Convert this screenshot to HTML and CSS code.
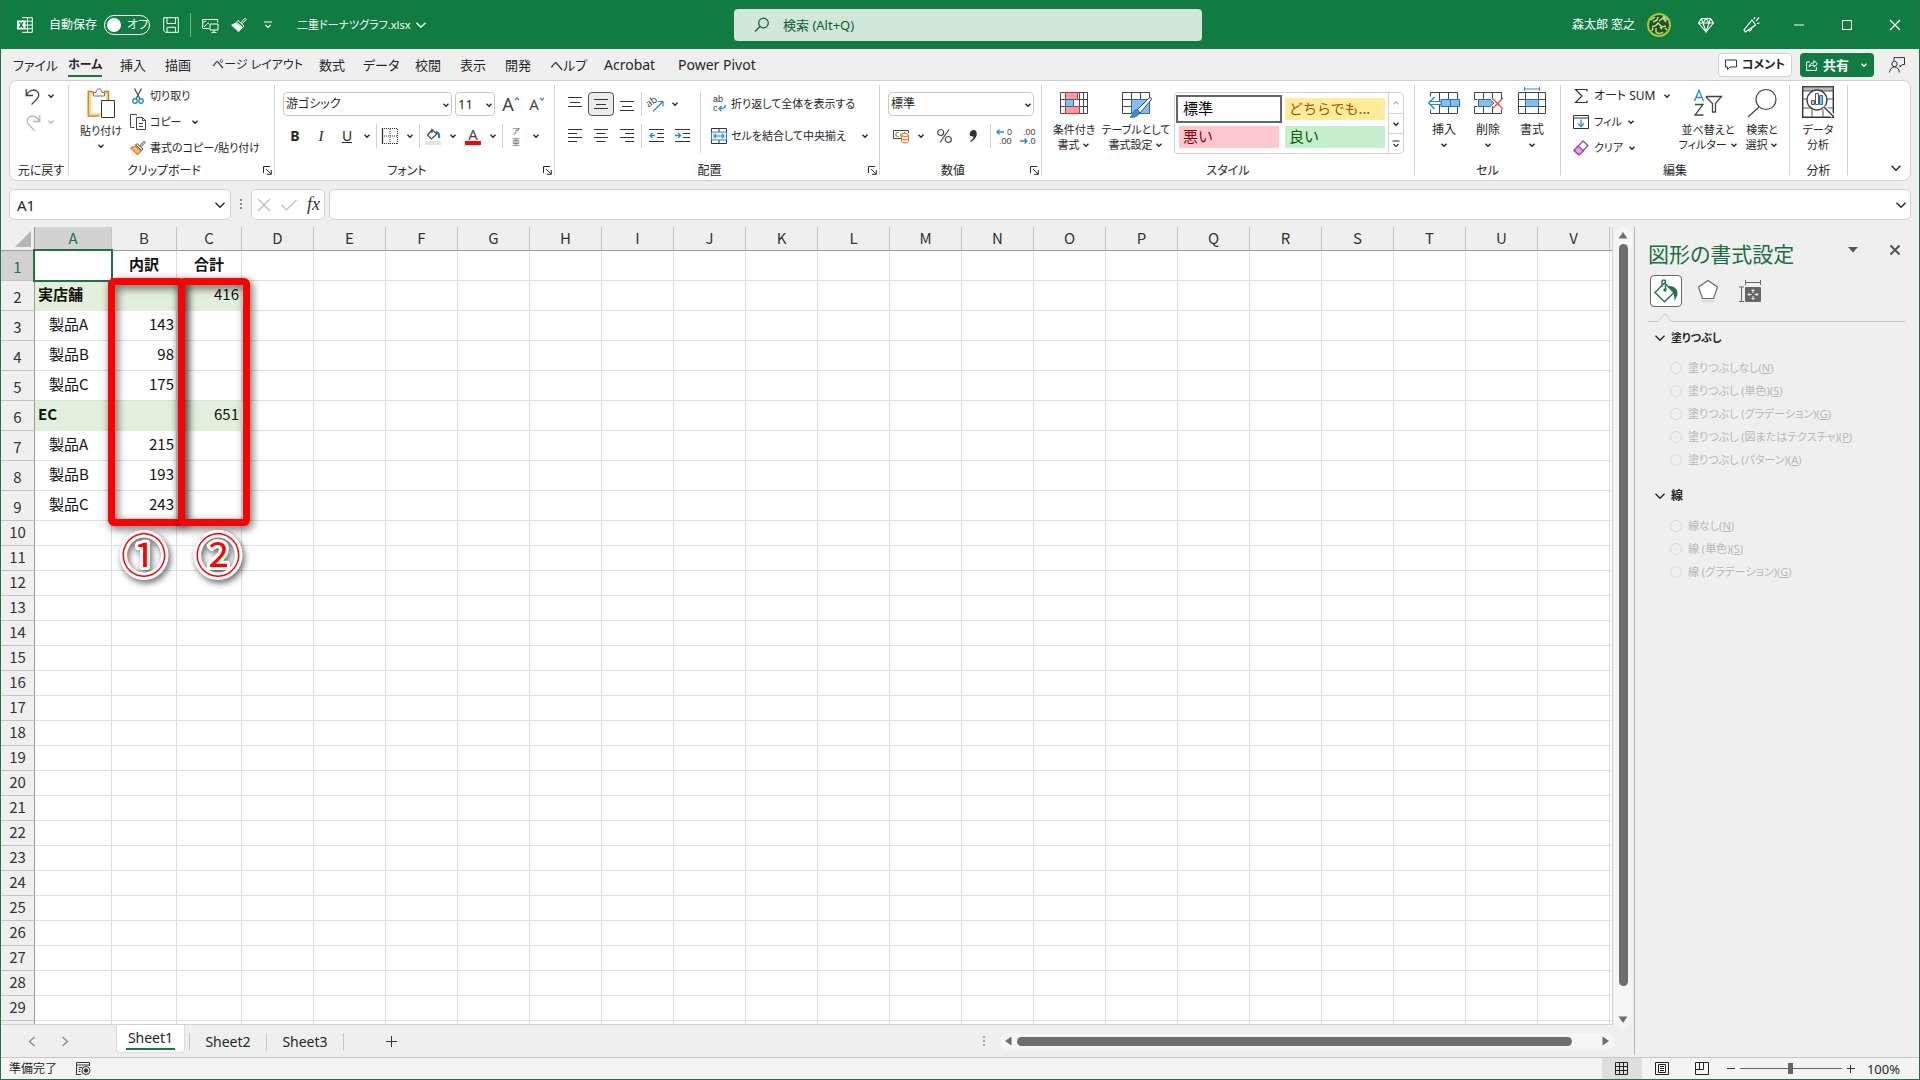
FILE: index.html
```html
<!DOCTYPE html>
<html lang="ja">
<head>
<meta charset="utf-8">
<meta name="viewport" content="width=device-width, initial-scale=1">
<title>二重ドーナツグラフ.xlsx - Excel</title>
<link rel="stylesheet" href="styles.css">
</head>
<body>
<svg class="defs" aria-hidden="true">
  <symbol id="chev" viewBox="0 0 8 8"><path d="M1.5 2.8 4 5.2 6.5 2.8" fill="none" stroke="currentColor" stroke-width="1.4"/></symbol>
  <symbol id="chev-lg" viewBox="0 0 12 12"><path d="M1.5 3.8 6 8.2 10.500 3.8" fill="none" stroke="currentColor" stroke-width="1.400"/></symbol>
  <symbol id="launch" viewBox="0 0 9 9"><path d="M.5 7V.5H7M3 3l5 5M8.300 4v4.300H4" fill="none" stroke="currentColor"/></symbol>
</svg>
<div class="window">
  <header class="titlebar">
    <div class="title-left">
      <svg class="i-excel" width="16" height="16" viewBox="0 0 16 16" fill="none" stroke="#fff"><path d="M5 .7h10.300v14.600H5M5 4.300h10M5 8h10M5 11.700h10M10.500 1v14"/><path d="M0 3.500h8.500v9H0z" fill="#fff" stroke="none"/><path d="m2.300 5.200 3.800 5.600M6.100 5.200l-3.800 5.600" stroke="#107c41" stroke-width="1.500"/></svg>
      <span class="autosave">自動保存</span>
      <button class="toggle" aria-label="自動保存"><span class="knob"></span>オフ</button>
      <button class="tb save" aria-label="保存"><svg width="16" height="16" viewBox="0 0 16 16" fill="none" stroke="#fff"><path d="M.7.7h14.600v14.600H2.500L.7 13.500zM4 .7v5.800h8.500V.7M4 15.300v-5h8.500v5"/></svg></button>
      <span class="tb-sep"></span>
      <button class="tb" aria-label="画面"><svg width="17" height="16" viewBox="0 0 17 16" fill="none" stroke="#fff"><path d="M7 11.500H.7V2.500h15v3M.7 5.500 4 4M2 9.500c2 0 2-3.500 5-3.500"/><path d="M8 7h8v6H8zM12 13v2.500M9.500 15.400h5"/></svg></button>
      <button class="tb" aria-label="書式のコピー"><svg width="16" height="16" viewBox="0 0 16 16"><path d="m10 5.500 4-4.300 1.200 1.200-4 4.200z" fill="none" stroke="#fff"/><path d="M7 3.500 13 9l-1.300 1.500L5.500 5z" fill="#107c41" stroke="#fff"/><path d="M5 5.500 11.500 11 7.500 15 0 8z" fill="#fff"/></svg></button>
      <button class="tb custom" aria-label="クイック アクセス"><svg width="8" height="8" viewBox="0 0 8 8" fill="none" stroke="#fff" stroke-width="1.200"><path d="M0 1h8M1.500 4 4 6.500 6.500 4"/></svg></button>
      <span class="filename">二重ドーナツグラフ.xlsx</span>
      <svg class="file-chev" width="12" height="12"><use href="#chev-lg"/></svg>
    </div>
    <label class="search"><svg width="16" height="16" viewBox="0 0 16 16" fill="none" stroke="#0e5c30" stroke-width="1.200"><circle cx="9.500" cy="6" r="4.800"/><path d="M6 9.500 1 14.500"/></svg><input type="text" placeholder="検索 (Alt+Q)" aria-label="検索"></label>
    <div class="title-right">
      <span>森太郎 窓之</span>
      <svg class="avatar" width="24" height="24" viewBox="0 0 24 24"><circle cx="12" cy="12" r="12" fill="#a5c63b"/><circle cx="12" cy="12" r="10" fill="#20541d"/><path d="M4 7 8 4M16 3l4 4M6 9l4-2 1-3M12 8l4-3 3 4M5 14c4-1 5-2 6-4l4 4 4-1M5 18l1-3M9 15v4c1 2 5 2 7 0M13 14l2 2M18 15l2 2" fill="none" stroke="#c9d9a0" stroke-width="1.500"/></svg>
      <button class="tb premium" aria-label="Premium"><svg width="16" height="16" viewBox="0 0 16 16" fill="none" stroke="#fff" stroke-width="1.100"><path d="M3.500 1.500h9L15.500 6 8 15 .5 6zM.5 6h15M5 6l3 9 3-9M3.500 1.500 5 6l3-4.500L11 6l1.500-4.500"/></svg></button>
      <button class="tb pen" aria-label="新機能"><svg width="17" height="17" viewBox="0 0 17 17" fill="none" stroke="#fff" stroke-width="1.200"><path d="M9 4 1 14l1.500 2L12.500 9zM9 4l3.500 5M5.500 13.500c0 2 3 2 3.500-2M11 3l1-2M13 5l3-3.500M14 7.500l2.500-.5"/></svg></button>
      <button class="win" aria-label="最小化"><svg width="10" height="10" viewBox="0 0 10 10"><path d="M0 5h10" stroke="#fff"/></svg></button>
      <button class="win" aria-label="最大化"><svg width="10" height="10" viewBox="0 0 10 10"><path d="M.5.5h9v9h-9z" fill="none" stroke="#fff"/></svg></button>
      <button class="win" aria-label="閉じる"><svg width="10" height="10" viewBox="0 0 10 10"><path d="m0 0 10 10M10 0 0 10" stroke="#fff" stroke-width="1.200"/></svg></button>
    </div>
  </header>

  <nav class="tabs">
    <div class="tab-list">
      <a href="#file">ファイル</a><a href="#home" class="active">ホーム</a><a href="#insert">挿入</a><a href="#draw">描画</a><a href="#layout" class="long">ページ レイアウト</a><a href="#formulas">数式</a><a href="#data">データ</a><a href="#review">校閲</a><a href="#view">表示</a><a href="#dev">開発</a><a href="#help">ヘルプ</a><a href="#acrobat" class="latin">Acrobat</a><a href="#pivot" class="latin">Power Pivot</a>
    </div>
    <div class="tab-actions">
      <button class="comment"><svg width="12" height="12" viewBox="0 0 12 12" fill="none" stroke="#333"><path d="M.5 1h11v7H5L2.500 10.500V8h-2z"/></svg>コメント</button>
      <button class="share"><svg width="12" height="12" viewBox="0 0 12 12" fill="none" stroke="#fff"><path d="M4 3H.6v8.400h9.800V8M3 8c.5-3 2-4 5-4V1.500L11.500 5 8 8V6C6 6 4.500 6.500 3 8z"/></svg>共有<svg class="c" width="8" height="8"><use href="#chev"/></svg></button>
      <button class="plain" aria-label="フィードバック"><svg width="16" height="16" viewBox="0 0 16 16" fill="none" stroke="#333"><path d="M5 4V.6h10.500v7H13l-2 2.500V8"/><circle cx="5.500" cy="7" r="2.700"/><path d="M.6 15.500c0-7.300 9.800-7.300 9.800 0"/></svg></button>
    </div>
  </nav>

  <section class="ribbon">
    <div class="group g-undo">
      <div class="body rows3">
        <button class="row"><svg width="16" height="17" viewBox="0 0 16 17" fill="none" stroke="#444" stroke-width="1.300"><path d="M1.200 1v6.500H8M1.500 7C4 2 9 .8 12 3.300c3 2.700 2 6-1 8.700l-4.500 4.500"/></svg><svg class="c" width="8" height="8"><use href="#chev"/></svg></button>
        <button class="row dim"><svg width="16" height="17" viewBox="0 0 16 17" fill="none" stroke="#b5b5b5" stroke-width="1.300"><path d="M14.800 1v6.500H8M14.500 7C12 2 7 .8 4 3.300c-3 2.700-2 6 1 8.700l4.500 4.500"/></svg><svg class="c" width="8" height="8"><use href="#chev"/></svg></button>
      </div>
      <div class="label">元に戻す</div>
    </div><i class="sep"></i>

    <div class="group g-clip">
      <div class="body">
        <button class="big paste"><svg width="30" height="31" viewBox="0 0 30 31" fill="none"><path d="M3.700 4.700h18v22h-18z" fill="#fff" stroke="#f8d48a" stroke-width="3"/><path d="M13 28.200H2.200V3.500h5M18 3.500h4.500V12" stroke="#e07515" stroke-width="1.300"/><path d="M7.500 8V4.500H10c0-5 6-5 6 0h2.500V8z" fill="#f6f6f6" stroke="#777"/><path d="M15.500 12.500h13v17h-13z" fill="#fff" stroke="#333"/></svg><span>貼り付け</span><svg class="c" width="8" height="8"><use href="#chev"/></svg></button>
        <div class="rows3">
          <button class="row"><svg width="16" height="16" viewBox="0 0 16 16" fill="none"><path d="M4.500.5 10 11M11.500.5 6 11" stroke="#444" stroke-width="1.200"/><circle cx="5" cy="13" r="2.200" stroke="#2b88d8" stroke-width="1.400"/><circle cx="11" cy="13" r="2.200" stroke="#2b88d8" stroke-width="1.400"/></svg>切り取り</button>
          <button class="row"><svg width="16" height="16" viewBox="0 0 16 16" fill="none" stroke="#444"><path d="M6.500 1.500V.5h-6v13h4M6.500 3.500h6l3 3v9h-9zM12.500 3.500v3h3M9 9.500h4M9 12.500h4"/></svg>コピー<svg class="c c2" width="8" height="8"><use href="#chev"/></svg></button>
          <button class="row"><svg width="16" height="16" viewBox="0 0 16 16"><path d="m10 5.500 4-4.300 1.200 1.200-4 4.200z" fill="none" stroke="#444"/><path d="M7 3.500 13 9l-1.300 1.500L5.500 5z" fill="#fff" stroke="#444"/><path d="M5.500 6 11 11 7.500 14.700.8 8z" fill="#f8c27c" stroke="#e07515" stroke-width="1.200"/></svg>書式のコピー/貼り付け</button>
        </div>
      </div>
      <div class="label">クリップボード</div><svg class="launch" width="9" height="9"><use href="#launch"/></svg>
    </div><i class="sep"></i>

    <div class="group g-font">
      <div class="body rows2">
        <div class="line combos">
          <span class="combo grow"><select aria-label="フォント"><option>游ゴシック</option></select><svg width="8" height="8"><use href="#chev"/></svg></span>
          <span class="combo size"><select aria-label="フォント サイズ"><option>11</option></select><svg width="8" height="8"><use href="#chev"/></svg></span>
          <button class="ib w24 big-a" aria-label="拡大">A<svg width="6" height="6" viewBox="0 0 6 6"><path d="M1 4 3 1.800 5 4" fill="none" stroke="#2b88d8" stroke-width="1.200"/></svg></button>
          <button class="ib w28 small-a" aria-label="縮小">A<svg width="6" height="6" viewBox="0 0 6 6"><path d="M1 1.800 3 4 5 1.800" fill="none" stroke="#2b88d8" stroke-width="1.200"/></svg></button>
        </div>
        <div class="line">
          <button class="ib w24 bold">B</button><button class="ib w28 ital">I</button><button class="ib w24 und">U</button><svg class="c w16" width="8" height="8"><use href="#chev"/></svg><i class="vs"></i>
          <button class="ib w24" aria-label="罫線"><svg width="16" height="16" viewBox="0 0 16 16" fill="none" stroke="#333"><path d="M.5 0v16" stroke-width="1.300"/><path d="M2 .5h14M2 8h14M2 15.500h14M8 1v15M15.500 1v15" stroke-dasharray="1 1"/></svg></button><svg class="c w16" width="8" height="8"><use href="#chev"/></svg><i class="vs"></i>
          <button class="ib w24" aria-label="塗りつぶし"><svg width="16" height="17" viewBox="0 0 16 17" fill="none"><path d="M0 13h16v4H0z" fill="#dfead6"/><path d="M7 2 2.500 7 6.500 11 12 6 7 1.500V5" stroke="#444" stroke-width="1.200"/><path d="M11 4c3 0 3.500 3 3 6" stroke="#2072b8" stroke-width="2"/></svg></button><svg class="c w16" width="8" height="8"><use href="#chev"/></svg>
          <button class="ib w24 fcolor" aria-label="フォントの色"><span>A</span></button><svg class="c w16" width="8" height="8"><use href="#chev"/></svg><i class="vs"></i>
          <button class="ib w24 ruby" aria-label="ふりがな"><span>ア</span><span>亜</span></button><svg class="c w16" width="8" height="8"><use href="#chev"/></svg>
        </div>
      </div>
      <div class="label">フォント</div><svg class="launch" width="9" height="9"><use href="#launch"/></svg>
    </div><i class="sep"></i>

    <div class="group g-align">
      <div class="body">
        <div class="rows2 al">
          <div class="line">
            <button class="ib w26" aria-label="上揃え"><svg width="14" height="14" viewBox="0 0 14 14" stroke="#333"><path d="M0 .5h14M2 5.500h10M0 9.500h14"/></svg></button><button class="ib w26 on" aria-label="上下中央揃え"><svg width="14" height="14" viewBox="0 0 14 14" stroke="#333"><path d="M0 2.500h14M2 7.500h10M0 11.500h14"/></svg></button><button class="ib w26" aria-label="下揃え"><svg width="14" height="14" viewBox="0 0 14 14" stroke="#333"><path d="M0 4.500h14M2 9.500h10M0 13.500h14"/></svg></button><i class="vs"></i>
            <button class="ib w24 orient" aria-label="方向"><svg width="17" height="17" viewBox="0 0 17 17" fill="none"><text x="0" y="9" font-size="10" fill="#444" transform="rotate(-35 5 8)">ab</text><path d="M6 15.500 15.500 6M11 5.500h5v5" stroke="#2b88d8" stroke-width="1.200"/></svg></button><svg class="c w16" width="8" height="8"><use href="#chev"/></svg>
          </div>
          <div class="line">
            <button class="ib w26" aria-label="左揃え"><svg width="14" height="14" viewBox="0 0 14 14" stroke="#333"><path d="M0 .5h14M0 4.500h9M0 8.500h14M0 12.500h9"/></svg></button><button class="ib w26" aria-label="中央揃え"><svg width="14" height="14" viewBox="0 0 14 14" stroke="#333"><path d="M0 .5h14M2.500 4.500h9M0 8.500h14M2.500 12.500h9"/></svg></button><button class="ib w26" aria-label="右揃え"><svg width="14" height="14" viewBox="0 0 14 14" stroke="#333"><path d="M0 .5h14M5 4.500h9M0 8.500h14M5 12.500h9"/></svg></button><i class="vs"></i>
            <button class="ib w26" aria-label="インデントを減らす"><svg width="15" height="14" viewBox="0 0 15 14" fill="none" stroke="#333"><path d="M0 .5h15M8 4.500h7M8 8.500h7M0 12.500h15"/><path d="M6 6.500H1M3.500 4 1 6.500 3.500 9" stroke="#2b88d8" stroke-width="1.300"/></svg></button><button class="ib w26" aria-label="インデントを増やす"><svg width="15" height="14" viewBox="0 0 15 14" fill="none" stroke="#333"><path d="M0 .5h15M8 4.500h7M8 8.500h7M0 12.500h15"/><path d="M0 6.500h5M3 4l2.500 2.500L3 9" stroke="#2b88d8" stroke-width="1.300"/></svg></button>
          </div>
        </div>
        <i class="tall"></i>
        <div class="rows2 wrapcol">
          <button class="line txt"><svg class="mini" width="16" height="16" viewBox="0 0 16 16" fill="none"><text x="2" y="6" fill="#333">ab</text><text x="2" y="15" fill="#333">c</text><path d="M14 9c1 3-2 3.500-6 3.500M10.500 10 8 12.500l2.500 2.500" stroke="#2b88d8" stroke-width="1.400"/></svg>折り返して全体を表示する</button>
          <button class="line txt"><svg width="16" height="16" viewBox="0 0 16 16" fill="none" stroke="#333"><path d="M.5.5h15v15H.5zM8 .5V4M8 12v3.500"/><path d="M.5 4h15v8H.5z" fill="#e3f1fb" stroke="#2b88d8"/><path d="M3 8h10M5 6 3 8l2 2M11 6l2 2-2 2" stroke="#2b88d8" stroke-width="1.200"/></svg>セルを結合して中央揃え<svg class="c push" width="8" height="8"><use href="#chev"/></svg></button>
        </div>
      </div>
      <div class="label">配置</div><svg class="launch" width="9" height="9"><use href="#launch"/></svg>
    </div><i class="sep"></i>

    <div class="group g-num">
      <div class="body rows2">
        <span class="combo"><select aria-label="表示形式"><option>標準</option></select><svg width="8" height="8"><use href="#chev"/></svg></span>
        <div class="line">
          <button class="ib w24" aria-label="通貨"><svg width="17" height="16" viewBox="0 0 17 16" fill="none" stroke="#444"><path d="M8 10.500H.5v-8h15V5M5.500 4.500C2 4 2 9 5.500 8.500M8 8.500V5.500M12 4.500 9.500 6"/><path d="M8.500 7v6.500c0 2 7 2 7 0V7" fill="#fdf0e0" stroke="#e07515"/><ellipse cx="12" cy="7" rx="3.500" ry="1.500" fill="#fff" stroke="#e07515"/><path d="M8.500 10.500c0 1.700 7 1.700 7 0" stroke="#e07515"/></svg></button><svg class="c w16" width="8" height="8"><use href="#chev"/></svg>
          <button class="ib w28 pct" aria-label="パーセント"><svg width="15" height="16" viewBox="0 0 15 16" fill="none" stroke="#444" stroke-width="1.200"><circle cx="3.700" cy="4.500" r="3"/><circle cx="11.300" cy="11.500" r="3"/><path d="M12 1.500 3 14.500"/></svg></button><button class="ib comma" aria-label="桁区切り"><svg width="9" height="14" viewBox="0 0 9 14"><path d="M4 1c5-1 6 8-2.500 12l-.5-1c3-2 3.500-3 3.500-4.500C-1 8.500 0 1.500 4 1z" fill="#333"/></svg></button><i class="vs"></i>
          <button class="ib w26" aria-label="小数点以下の桁数を増やす"><svg class="mini" width="17" height="17" viewBox="0 0 17 17" fill="none"><text x="11" y="7" fill="#444">0</text><text x="3" y="16" fill="#444">.00</text><path d="M8 4H1M3.500 1.500 1 4l2.500 2.500" stroke="#2b88d8" stroke-width="1.300"/></svg></button><button class="ib w26" aria-label="小数点以下の桁数を減らす"><svg class="mini" width="17" height="17" viewBox="0 0 17 17" fill="none"><text x="3" y="7" fill="#444">.00</text><text x="8" y="16" fill="#444">.0</text><path d="M0 13h7M4.500 10.500 7 13l-2.500 2.500" stroke="#2b88d8" stroke-width="1.300"/></svg></button>
        </div>
      </div>
      <div class="label">数値</div><svg class="launch" width="9" height="9"><use href="#launch"/></svg>
    </div><i class="sep"></i>

    <div class="group g-style">
      <div class="body">
        <button class="big w60"><svg width="30" height="30" viewBox="0 0 30 30" fill="none" stroke="#444"><path d="M1.500 4.500h27v21h-27zM1.500 11.500h27M1.500 18.500h27M20.500 4.500v21M24.500 4.500v21"/><path d="M6.500 4.500h12v7h-12zM6.500 18.500h14v7h-14z" fill="#ff9a9a" stroke="#d92b2b"/><path d="M6.500 11.500h8v7h-8z" fill="#83beec" stroke="#1f6fc0"/></svg><span>条件付き<br>書式 <svg class="c" width="8" height="8"><use href="#chev"/></svg></span></button>
        <button class="big w64"><svg width="30" height="30" viewBox="0 0 30 30" fill="none" stroke="#444"><path d="M1.500 4.500h27v21h-27zM1.500 11.500h27M1.500 18.500h27M10.500 4.500v21M19.500 4.500v21"/><path d="M10.500 11.500h18v14h-18z" fill="#83beec" stroke="#1f6fc0"/><path d="m16 22 12-12c2-1 3 0 2 2L19 25z" fill="#fff" stroke="#444"/><path d="M9 29c3-1 2-6 6-7 3-.5 4 2 2.500 4.500-2 2.500-5 3-8.500 2.500z" fill="#3f8fd8" stroke="#1f6fc0"/></svg><span>テーブルとして<br>書式設定 <svg class="c" width="8" height="8"><use href="#chev"/></svg></span></button>
        <div class="gallery">
          <div class="swatches">
            <button class="sw normal">標準</button><button class="sw neutral">どちらでも...</button><button class="sw bad">悪い</button><button class="sw good">良い</button>
          </div>
          <div class="gscroll">
            <button aria-label="上へ" class="dim"><svg width="8" height="8" viewBox="0 0 8 8" fill="none" stroke="#b0b0b0" stroke-width="1.200"><path d="M1.500 5.200 4 2.800 6.500 5.200"/></svg></button>
            <button aria-label="下へ"><svg width="8" height="8"><use href="#chev"/></svg></button>
            <button aria-label="その他"><svg width="8" height="8" viewBox="0 0 8 8" fill="none" stroke="#333" stroke-width="1.200"><path d="M.5 1h7M1.500 4 4 6.500 6.500 4"/></svg></button>
          </div>
        </div>
      </div>
      <div class="label">スタイル</div>
    </div><i class="sep"></i>

    <div class="group g-cells">
      <div class="body">
        <button class="big w44"><svg width="32" height="30" viewBox="0 0 32 30" fill="none" stroke="#444"><path d="M2.500 4.500h27v21h-27zM11.500 4.500v21M20.500 4.500v21"/><path d="M13 11.500h18.500v7H13z" fill="#83beec" stroke="#1f6fc0"/><path d="M22.500 11.500v7" stroke="#1f6fc0"/><path d="M0 8.500h4v13H0z" fill="#fff" stroke="none"/><path d="M13 13.500H1.500v3H13z" fill="#fff" stroke="#2b88d8"/><path d="M6.500 9 .8 15l5.700 6" stroke="#2b88d8" stroke-width="1.400"/></svg><span>挿入</span><svg class="c" width="8" height="8"><use href="#chev"/></svg></button>
        <button class="big w44"><svg width="32" height="30" viewBox="0 0 32 30" fill="none" stroke="#444"><path d="M2.500 11.500v-7h27v7M2.500 18.500v7h27v-4M2.500 11.500h3M2.500 18.500h3M11.500 4.500v7M20.500 4.500v7M11.500 18.500v7M20.500 18.500v7"/><path d="M6.500 11.500H18l4 3.500-4 3.500H6.500z" fill="#83beec" stroke="#1f6fc0"/><path d="m20 10 11 11M31 10 20 21" stroke="#e84a4a" stroke-width="1.400"/></svg><span>削除</span><svg class="c" width="8" height="8"><use href="#chev"/></svg></button>
        <button class="big w44"><svg width="32" height="30" viewBox="0 0 32 30" fill="none" stroke="#444"><path d="M2.500 4.500h27v21h-27zM2.500 11.500h27M2.500 18.500h27M9.500 4.500v21M22.500 4.500v21"/><path d="M9.500 11.500h13v7h-13z" fill="#83beec" stroke="#1f6fc0"/><path d="M8.500 1h15M8.500-1v4M23.500-1v4" stroke="#2b88d8"/></svg><span>書式</span><svg class="c" width="8" height="8"><use href="#chev"/></svg></button>
      </div>
      <div class="label">セル</div>
    </div><i class="sep"></i>

    <div class="group g-edit">
      <div class="body">
        <div class="rows3 editcol">
          <button class="row"><svg width="16" height="16" viewBox="0 0 16 16" fill="none" stroke="#333" stroke-width="1.200"><path d="M14 3.500V1.500H2.500L9 8l-6.500 6.500H14v-2"/></svg>オート SUM<svg class="c push" width="8" height="8"><use href="#chev"/></svg></button>
          <button class="row kana"><svg width="16" height="16" viewBox="0 0 16 16" fill="none" stroke="#333"><path d="M.5 1.500h15v13H.5zM.5 4h15"/><path d="M8 5.500v7M5 9.500l3 3 3-3" stroke="#2b88d8" stroke-width="1.300"/></svg>フィル<svg class="c" width="8" height="8"><use href="#chev"/></svg></button>
          <button class="row kana"><svg width="16" height="16" viewBox="0 0 16 16" fill="none" stroke="#9b3da8" stroke-width="1.200"><path d="m10 1 5 4.500L6 15l-5-4.500z"/><path d="m5 6 5.500 5L6 15l-5-4.500z" fill="#dba8e2"/></svg>クリア<svg class="c" width="8" height="8"><use href="#chev"/></svg></button>
        </div>
        <button class="big w64"><svg width="30" height="30" viewBox="0 0 30 30" fill="none" stroke-width="1.300"><path d="M1.500 13 6 2.500 10.500 13M3 9.500h6" stroke="#2b88d8"/><path d="M2 16.500h8L2 27h8.500" stroke="#444"/><path d="M13.500 8.500h15l-6 7V24h-3v-8.500l-6-6z" stroke="#444"/></svg><span>並べ替えと<br>フィルター <svg class="c" width="8" height="8"><use href="#chev"/></svg></span></button>
        <button class="big w44"><svg width="30" height="30" viewBox="0 0 30 30" fill="none" stroke="#444" stroke-width="1.200"><circle cx="19" cy="11.500" r="10"/><path d="M12 19 1 29"/></svg><span>検索と<br>選択 <svg class="c" width="8" height="8"><use href="#chev"/></svg></span></button>
      </div>
      <div class="label">編集</div>
    </div><i class="sep"></i>

    <div class="group g-ana">
      <div class="body"><button class="big w56"><svg width="32" height="32" viewBox="0 0 32 32" fill="none" stroke="#555"><path d="M.7.7h30.600v30.600H.7z" stroke="#333" stroke-width="1.400"/><path d="M1 1h30v4H1z" fill="#bbb"/><path d="M1 13h30M1 22h30M10 22v9M21 22v9"/><circle cx="15" cy="14" r="10" fill="#fff" stroke="#444" stroke-width="1.400"/><path d="m22 21 9 9" stroke="#fff" stroke-width="4"/><path d="m22 21 9.500 9.500" stroke="#444" stroke-width="1.500"/><path d="M9.500 14.500h3v4h-3z" fill="#c8c8c8"/><path d="M13.500 7.500h3v11h-3z" fill="#fff"/><path d="M17.500 9.500h3v9h-3z" fill="#83beec" stroke="#1f6fc0"/></svg><span>データ<br>分析</span></button></div>
      <div class="label">分析</div>
    </div><i class="sep"></i>
    <button class="collapse" aria-label="リボンを折りたたむ"><svg width="12" height="12"><use href="#chev-lg"/></svg></button>
  </section>

  <section class="formula">
    <label class="namebox"><input type="text" value="A1" aria-label="名前ボックス"><svg width="12" height="12"><use href="#chev-lg"/></svg></label>
    <svg class="dots" width="3" height="11" viewBox="0 0 3 11" fill="#8a8a8a"><path d="M0 0h2v2H0zM0 4h2v2H0zM0 8h2v2H0z"/></svg>
    <div class="fx">
      <button aria-label="キャンセル"><svg width="14" height="14" viewBox="0 0 14 14" stroke="#bcbcbc" stroke-width="1.200"><path d="m1 1 12 12M13 1 1 13"/></svg></button>
      <button aria-label="入力"><svg width="16" height="14" viewBox="0 0 16 14" fill="none" stroke="#bcbcbc" stroke-width="1.200"><path d="m.5 7 5 5L15.500 2"/></svg></button>
      <button class="fn">fx</button>
    </div>
    <label class="fbox"><input type="text" aria-label="数式バー"><svg width="12" height="12"><use href="#chev-lg"/></svg></label>
  </section>

  <main class="work">
    <div class="book">
      <div class="gridrow">
        <div class="sheet">
          <table id="grid"></table>
          <div class="cursor"></div>
          <div class="mark m1"></div><div class="mark m2"></div>
          <svg class="num n1" width="60" height="60" viewBox="0 0 60 60"><text x="30" y="47">①</text></svg>
          <svg class="num n2" width="60" height="60" viewBox="0 0 60 60"><text x="30" y="47">②</text></svg>
        </div>
        <div class="vscroll"><svg width="10" height="8" viewBox="0 0 10 8"><path d="M5 1 9.500 7.500h-9z" fill="#6e6e6e"/></svg><div class="thumb"></div><svg width="10" height="8" viewBox="0 0 10 8"><path d="M5 7 .5.5h9z" fill="#6e6e6e"/></svg></div>
      </div>
      <div class="sheetbar">
        <button class="nav" aria-label="前のシート"><svg width="8" height="11" viewBox="0 0 8 11" fill="none" stroke="#8a8a8a" stroke-width="1.300"><path d="M6.500 1 1.500 5.500l5 4.500"/></svg></button>
        <button class="nav" aria-label="次のシート"><svg width="8" height="11" viewBox="0 0 8 11" fill="none" stroke="#8a8a8a" stroke-width="1.300"><path d="m1.500 1 5 4.500-5 4.500"/></svg></button>
        <div class="stabs"><button class="stab on"><span>Sheet1</span></button><button class="stab">Sheet2</button><button class="stab">Sheet3</button></div>
        <button class="add" aria-label="新しいシート"><svg width="11" height="11" viewBox="0 0 11 11"><path d="M5.500 0v11M0 5.500h11" stroke="#333"/></svg></button>
        <svg class="hdots" width="2" height="11" viewBox="0 0 2 11" fill="#aaa"><path d="M0 0h2v2H0zM0 4h2v2H0zM0 8h2v2H0z"/></svg>
        <div class="hscroll"><svg width="8" height="10" viewBox="0 0 8 10"><path d="M1 5 7.500.5v9z" fill="#6e6e6e"/></svg><div class="thumb"></div><svg width="8" height="10" viewBox="0 0 8 10"><path d="M7 5 .5.5v9z" fill="#6e6e6e"/></svg></div>
      </div>
    </div>
    <aside class="pane">
      <div class="pane-head"><h2>図形の書式設定</h2><button aria-label="オプション"><svg width="10" height="6" viewBox="0 0 10 6"><path d="M0 0h10L5 5.500z" fill="#555"/></svg></button><button aria-label="閉じる"><svg width="10" height="10" viewBox="0 0 10 10"><path d="m.5.5 9 9M9.500.5l-9 9" stroke="#555" stroke-width="2"/></svg></button></div>
      <div class="pane-icons">
        <button class="on" aria-label="塗りつぶしと線"><svg width="24" height="24" viewBox="0 0 24 24" fill="none" stroke="#217346" stroke-width="1.400"><path d="M1 13.500 10.500 4l9.500 9.500-9.500 9.300zM8 8V2.500c0-2 3.500-2 3.500 0V10"/><circle cx="11" cy="11" r="1" fill="#217346"/><path d="M14 7c6 0 10 2 9.500 9l-3 6c0-6-1-10-6.500-15z" fill="#217346" stroke="none"/></svg></button>
        <button aria-label="効果"><svg width="22" height="24" viewBox="0 0 22 24" fill="#fff" stroke="#666" stroke-width="1.200"><path d="M11 1.500 20.500 8l-4 11.500h-11L1.500 8z"/><path d="M5 20.500h12l1 3H4z" fill="#ddd" stroke="none"/></svg></button>
        <button aria-label="サイズとプロパティ"><svg width="22" height="22" viewBox="0 0 22 22" fill="none" stroke="#666"><path d="M6.500 7.500h15v14h-15z" fill="#666"/><path d="M7 2.500h14M6.500 0v5M21.500 0v5M2.500 7v15M0 7h5M0 21.500h5"/><path d="M14 10v3M14 16v3M9.500 14.500h3M15.500 14.500h3M12.500 11 14 9.500l1.500 1.500M12.500 18l1.500 1.500 1.500-1.500M10.500 13 9 14.500l1.500 1.500M17.500 13l1.500 1.500-1.500 1.500" stroke="#fff"/></svg></button>
      </div>
      <svg class="notch" width="100%" height="10"><path d="M0 9.500h10l7-8 7 8h233" fill="none" stroke="#c8c8c8"/></svg>
      <fieldset>
        <legend><svg width="12" height="12"><use href="#chev-lg"/></svg>塗りつぶし</legend>
        <label><input type="radio" name="fill" disabled><span>塗りつぶしなし(<u>N</u>)</span></label>
        <label><input type="radio" name="fill" disabled><span>塗りつぶし (単色)(<u>S</u>)</span></label>
        <label><input type="radio" name="fill" disabled><span>塗りつぶし (グラデーション)(<u>G</u>)</span></label>
        <label><input type="radio" name="fill" disabled><span>塗りつぶし (図またはテクスチャ)(<u>P</u>)</span></label>
        <label><input type="radio" name="fill" disabled><span>塗りつぶし (パターン)(<u>A</u>)</span></label>
      </fieldset>
      <fieldset>
        <legend><svg width="12" height="12"><use href="#chev-lg"/></svg>線</legend>
        <label><input type="radio" name="line" disabled><span>線なし(<u>N</u>)</span></label>
        <label><input type="radio" name="line" disabled><span>線 (単色)(<u>S</u>)</span></label>
        <label><input type="radio" name="line" disabled><span>線 (グラデーション)(<u>G</u>)</span></label>
      </fieldset>
    </aside>
  </main>

  <footer class="status">
    <span>準備完了</span>
    <svg class="macro" width="15" height="13" viewBox="0 0 15 13" fill="none" stroke="#333"><path d="M5 12.500H.5V.5h13V4M.5 3h13M2.500 5.500h4M2.500 7.500h2M2.500 9.500h2"/><circle cx="10" cy="8.500" r="4"/><circle cx="10" cy="8.500" r="1.700" fill="#333"/></svg>
    <div class="views">
      <button class="on" aria-label="標準"><svg width="13" height="13" viewBox="0 0 13 13" fill="none" stroke="#222"><path d="M.5.5h12v12H.5zM.5 4.500h12M.5 8.500h12M4.500.5v12M8.500.5v12"/></svg></button>
      <button aria-label="ページ レイアウト"><svg width="14" height="13" viewBox="0 0 14 13" fill="none" stroke="#222"><path d="M.5.5h13v12H.5zM3.500 2.500h7v8h-7zM5 4.500h4M5 6.500h4M5 8.500h4"/></svg></button>
      <button aria-label="改ページ プレビュー"><svg width="14" height="13" viewBox="0 0 14 13" fill="none" stroke="#222"><path d="M.5.5h13v12H.5zM.5 7.500h8v-7M4.500.5v7"/></svg></button>
    </div>
    <button class="zb" aria-label="縮小"><svg width="8" height="8" viewBox="0 0 8 8"><path d="M0 3.500h8" stroke="#333"/></svg></button>
    <input class="zoom" type="range" min="0" max="100" value="50" aria-label="ズーム">
    <button class="zb" aria-label="拡大"><svg width="8" height="8" viewBox="0 0 8 8"><path d="M0 3.500h8M3.500 0v8" stroke="#333"/></svg></button>
    <span class="pctv">100%</span>
  </footer>
</div>
<script src="grid.js"></script>
</body>
</html>
```
FILE: styles.css
```css
* { box-sizing: border-box; }
body { margin: 0; font: 12px/16px "Noto Sans", "Noto Sans CJK JP", sans-serif; font-feature-settings: "palt"; color: #262626; }
button, input, select { font: inherit; font-feature-settings: inherit; color: inherit; }
button { border: 0; background: none; padding: 0; display: flex; align-items: center; justify-content: center; white-space: nowrap; }
svg { flex: none; display: block; overflow: visible; }
.defs { position: absolute; width: 0; height: 0; }
.window { height: 100vh; display: flex; flex-direction: column; background: #efefef; border: 1px solid #217346; border-top: 0; overflow: hidden; }

.titlebar { height: 49px; flex: none; background: #107c41; color: #fff; display: grid; grid-template-columns: 1fr 468px 1fr; align-items: center; padding-left: 16px; }
.title-left, .title-right { display: flex; align-items: center; white-space: nowrap; }
.autosave { margin-left: 16px; width: 55px; }
.toggle { width: 46px; height: 20px; border: 1px solid #fff; border-radius: 10px; justify-content: flex-start; padding-left: 2px; gap: 6px; }
.knob { width: 14px; height: 14px; border-radius: 50%; background: #fff; }
.tb.save { margin-left: 13px; }
.tb-sep { width: 1px; height: 24px; background: #6fb08d; margin: 0 0 0 11px; }
.tb-sep + .tb { margin-left: 11px; margin-right: 12px; }
.custom { margin-left: 17px; }
.filename { margin-left: 25px; font-size: 11px; }
.file-chev { margin-left: 4px; }
.search { height: 32px; background: #d1e7da; border-radius: 4px; display: flex; align-items: center; padding-left: 20px; gap: 13px; }
.search input { border: 0; background: none; outline: 0; flex: 1; font-size: 13px; padding: 0; }
.search input::placeholder { color: #0e5c30; }
.title-right { justify-content: flex-end; }
.avatar { margin-left: 12px; }
.premium { margin-left: 27px; }
.pen { margin: 0 15px 0 29px; }
.win { width: 48px; height: 48px; }

.tabs { height: 31px; flex: none; display: flex; justify-content: space-between; align-items: center; padding: 0 14px 0 12px; }
.tab-list { display: grid; grid-template-columns: 55px 52px 45px 47px 107px 44px 52px 45px 45px 45px 54px 74px 90px; font-size: 13px; }
.tab-list a { color: #262626; text-decoration: none; justify-self: start; white-space: nowrap; line-height: 20px; border-bottom: 2px solid transparent; margin-top: 3px; }
.tab-list .latin { font-size: 14px; }
.tab-list .long { font-size: 12px; }
.tab-list .active { font-size: 12px; font-weight: 700; border-color: #107c41; }
.tab-actions { display: flex; align-items: center; }
.comment, .share { width: 74px; height: 24px; border-radius: 4px; gap: 5px; font-weight: 700; }
.comment { background: #fff; border: 1px solid #d1d1d1; }
.share { background: #107c41; color: #fff; margin: 0 15px 0 8px; font-size: 13px; }
.share .c { margin-left: 6px; }

.ribbon { flex: none; margin: 0 8px; background: #fff; border: 1px solid #d1d1d1; border-radius: 8px; height: 101px; display: flex; }
.group { position: relative; display: flex; flex-direction: column; }
.sep { width: 1px; margin: 4px 0 5px; background: #d1d1d1; }
.body { flex: 1; display: flex; }
.label { height: 18px; line-height: 18px; text-align: center; }
.g-clip .label, .g-font .label, .g-align .label, .g-num .label { padding-right: 15px; }
.launch { position: absolute; right: 2px; bottom: 5px; }
.rows3 { display: flex; flex-direction: column; padding-top: 2px; }
.row { height: 26px; justify-content: flex-start; gap: 4px; }
.rows2 { display: flex; flex-direction: column; gap: 8px; padding-top: 11px; }
.line { display: flex; align-items: center; height: 24px; }
.dim { color: #b5b5b5; }
.big { flex-direction: column; justify-content: flex-start; padding-top: 7px; line-height: 15px; font-size: 11px; }
.big > span { margin-top: 4px; }
.big > .c { margin-top: 4px; }
.big span .c { display: inline-block; vertical-align: 0; }
.big svg + span { text-align: center; }
.w60 { width: 60px; } .w64 { width: 64px; } .w44 { width: 44px; } .w56 { width: 56px; }
.g-cells .big { font-size: 12px; }
.ib { height: 24px; }
.w28 { width: 28px; } .w26 { width: 26px; } .w24 { width: 24px; } .w16 { width: 16px; }
.vs { width: 1px; height: 24px; background: #d1d1d1; margin: 0 1px; }
.mini text { font: 9px "Liberation Sans", sans-serif; }

.g-undo { width: 58px; } .g-undo .row { padding-left: 15px; gap: 6px; } .g-undo .label { padding-left: 4px; }
.g-clip { width: 205px; font-size: 11px; } .g-clip .label { font-size: 12px; }
.paste { width: 48px; margin: 0 5px 0 8px; font-size: 11px; }
.c2 { margin-left: 5px; }
.g-font { width: 279px; } .g-font .body { padding-left: 8px; }
.combo { position: relative; display: flex; width: 169px; }
.combo select { appearance: none; width: 100%; height: 24px; border: 1px solid #c8c8c8; border-radius: 4px; background: #fff; padding: 0 2px; }
.combo svg { position: absolute; right: 2px; top: 9px; }
.size { width: 40px; margin: 0 4px 0 3px; }
.size select { font-size: 13px; }
.big-a { font-size: 18px; color: #444; } .small-a { font-size: 15px; color: #444; }
.big-a svg, .small-a svg { margin-bottom: 10px; }
.bold { font-weight: 700; font-size: 14px; } .ital { font: italic 15px "Liberation Serif", serif; } .und { text-decoration: underline; font-size: 14px; }
.fcolor span { font-size: 15px; line-height: 14px; border-bottom: 4px solid #f00; width: 16px; color: #444; }
.ruby { flex-direction: column; font-size: 8px; line-height: 11px; color: #555; }

.g-align { width: 324px; } .al { width: 145px; padding-left: 7px; }
.on.ib { border: 1px solid #555; border-radius: 4px; background: #ebebeb; }
.tall { width: 1px; height: 62px; background: #d1d1d1; margin-top: 10px; }
.wrapcol { width: 168px; padding-left: 10px; font-size: 11px; }
.txt { justify-content: flex-start; gap: 4px; }
.push { margin-left: auto; }
.g-num { width: 161px; } .g-num .body { padding-left: 8px; } .g-num .combo { width: 146px; }
.g-num .line { padding-left: 2px; } .pct { margin-left: 3px; } .comma { width: 33px; }

.g-style { width: 372px; } .g-style .body { padding-left: 2px; }
.gallery { margin: 11px 0 0 6px; width: 230px; height: 62px; border: 1px solid #d1d1d1; border-radius: 4px; display: flex; }
.swatches { flex: 1; display: grid; grid-template: 28px 28px / 106px 106px; padding: 2px 0 0 1px; align-content: start; }
.sw { margin: 3px; justify-content: flex-start; padding: 0 0 2px 4px; font: 15px/20px "Noto Sans CJK JP", sans-serif; font-feature-settings: normal; }
.normal { margin: 0; border: 2px solid #666; padding-left: 5px; color: #000; }
.neutral { background: #ffeb9c; color: #9c5700; font-size: 14px; } .bad { background: #ffc7ce; color: #9c0006; } .good { background: #c6efce; color: #006100; }
.gscroll { width: 15px; border-left: 1px solid #d1d1d1; display: grid; grid-template-rows: 1fr 1fr 1fr; }
.gscroll button + button { border-top: 1px solid #d1d1d1; }
.g-cells { width: 145px; } .g-cells .body { padding-left: 7px; }
.g-edit { width: 228px; } .editcol { width: 110px; padding-left: 12px; margin-right: 5px; }
.g-edit .row { gap: 5px; }
.g-edit .kana { font-size: 11px; }
.g-ana { width: 57px; } .g-ana .big { padding-top: 5px; }
.collapse { margin: auto 8px 6px auto; }

.formula { flex: none; display: flex; align-items: center; padding: 8px 8px 7px; }
.namebox, .fx, .fbox { height: 31px; background: #fff; border: 1px solid #d1d1d1; border-radius: 5px; display: flex; align-items: center; }
.namebox { width: 222px; padding: 0 4px 0 7px; }
.formula input { border: 0; outline: 0; padding: 0; flex: 1; min-width: 0; background: none; font-size: 15px; }
.dots { margin: 0 8px 0 9px; }
.fx { width: 74px; justify-content: space-between; padding: 0 4px 0 5px; }
.fn { font: italic 18px "Liberation Serif", serif; color: #333; }
.fbox { flex: 1; margin-left: 4px; padding: 0 3px; }

.work { flex: 1; min-height: 0; display: flex; }
.book { flex: 1; min-width: 0; display: flex; flex-direction: column; }
.gridrow { flex: 1; min-height: 0; display: flex; }
.sheet { position: relative; flex: 1; min-width: 0; overflow: hidden; background: #fff; border-right: 1px solid #d4d4d4; border-bottom: 1px solid #d4d4d4; }
#grid { border-collapse: separate; border-spacing: 0; table-layout: fixed; width: 0; font: 15px/20px "Noto Sans CJK JP", sans-serif; font-feature-settings: normal; color: #111; }
#grid th, #grid td { padding: 0 0 2px; overflow: hidden; white-space: nowrap; border-right: 1px solid #dedede; border-bottom: 1px solid #dedede; }
#grid th { background: #efefef; font-weight: 400; color: #333; }
#grid thead th { height: 24px; border-right-color: #c4c4c4; border-bottom-color: #9b9b9b; }
#grid tbody th { height: 25px; border-color: #c4c4c4; border-right-color: #9b9b9b; }
#grid .tall-row > * { height: 30px; padding-bottom: 3px; }
#grid .tall-row th { padding: 2px 0 0; }
#grid .sel { background: #d2d2d2; color: #217346; }
#grid td.c { text-align: center; font-weight: 700; }
#grid td.b { font-weight: 700; padding-left: 3px; }
#grid td.i { padding-left: 14px; }
#grid td.n { text-align: right; padding-right: 2px; }
#grid .green { background: #e2efda; border-color: #e2efda; }
#grid .corner { border-color: #9b9b9b; }
.corner svg { margin: 3px 3px 0 auto; }
.cursor { position: absolute; left: 32px; top: 22px; width: 80px; height: 33px; border: 2px solid #217346; }
.mark { position: absolute; top: 51px; height: 248px; border: 7px solid #f00; border-radius: 6px; filter: drop-shadow(2px 3px 4px rgba(0,0,0,.65)); }
.m1 { left: 107px; width: 77px; } .m2 { left: 177px; width: 72px; }
.num { position: absolute; top: 298px; filter: drop-shadow(2px 3px 3px rgba(0,0,0,.6)); }
.num text { font: 46px "Noto Sans CJK JP", sans-serif; text-anchor: middle; fill: #f00; stroke: #fff; stroke-width: 6px; paint-order: stroke; stroke-linejoin: round; }
.n1 { left: 113px; } .n2 { left: 187px; }
.vscroll { width: 18px; margin: 0 2px -3px 1px; background: #f5f5f5; border-radius: 9px; display: flex; flex-direction: column; align-items: center; padding: 4px 0; gap: 5px; }
.vscroll .thumb { flex: 1; width: 9px; border-radius: 5px; background: #6e6e6e; margin-bottom: 25px; }
.sheetbar { height: 32px; flex: none; display: flex; align-items: center; padding-right: 19px; }
.nav { width: 33px; padding-left: 1px; } .nav:first-child { margin-left: 14px; }
.stabs { display: flex; align-self: stretch; margin-left: 35px; font-size: 14px; }
.stab { width: 77px; height: 18px; margin-top: 8px; border-right: 1px solid #c8c8c8; }
.stab.on { width: 69px; height: 29px; margin: -1px 4px 0 0; background: #fff; border: 1px solid #dcdcdc; border-top: 0; border-radius: 0 0 4px 4px; }
.stab.on + .stab { width: 78px; border-left: 1px solid #c8c8c8; }
.stab.on span { border-bottom: 2px solid #107c41; padding: 0 2px; line-height: 20px; margin-top: 2px; }
.add { margin-left: 42px; }
.hdots { margin-left: auto; }
.hscroll { width: 615px; height: 17px; margin-left: 15px; background: #f5f5f5; border-radius: 9px; display: flex; align-items: center; padding: 0 5px 0 4px; gap: 5px; }
.hscroll .thumb { flex: 1; height: 9px; border-radius: 5px; background: #6e6e6e; margin-right: 25px; }

.pane { width: 285px; margin-bottom: 2px; border-left: 1px solid #b8b8b8; padding: 11px 14px 0 13px; }
.pane-head { display: flex; align-items: flex-start; }
.pane h2 { margin: 0 auto 0 0; font-size: 21px; line-height: 32px; font-weight: 400; color: #17703f; }
.pane-head button { height: 24px; }
.pane-head button + button { margin: 0 5px 0 32px; }
.pane-icons { display: flex; gap: 10px; margin: 5px 0 0 2px; }
.pane-icons button { width: 32px; height: 32px; }
.pane-icons .on { border: 1px solid #666; border-radius: 4px; background: #fff; }
.notch { margin-top: 5px; overflow: hidden; }
fieldset { border: 0; margin: 0; padding: 7px 0 0 6px; }
fieldset + fieldset { padding-top: 16px; }
legend { padding: 0; display: flex; align-items: center; gap: 5px; font-weight: 700; font-size: 11px; line-height: 18px; float: left; width: 100%; margin-bottom: 9px; }
fieldset label { clear: both; display: flex; align-items: center; height: 23px; gap: 6px; color: #b8b8b8; padding-left: 16px; white-space: nowrap; font-size: 11px; }
fieldset + fieldset legend { font-size: 12px; }
fieldset input { appearance: none; width: 12px; height: 12px; margin: 0; border: 1px solid #dadada; border-radius: 50%; flex: none; }

.status { height: 22px; flex: none; border-top: 1px solid #c6c6c6; background: #f4f4f4; display: flex; align-items: center; padding: 0 19px 0 8px; }
.macro { margin-left: 19px; }
.views { display: flex; margin-left: auto; align-self: stretch; }
.views button { width: 40px; } .views .on { background: #dedede; }
.zb { margin: 0 5px; }
.zoom { appearance: none; width: 102px; height: 11px; margin: 0; background: linear-gradient(#666, #666) center / 100% 1px no-repeat; }
.zoom::-webkit-slider-thumb { appearance: none; width: 5px; height: 11px; background: #666; }
.pctv { margin-left: 7px; font-size: 13px; }
```
FILE: grid.js
```js
const widths = [34, 77, 65, 65].concat(Array(19).fill(72), 40);
const rows = {
  1: [['', ''], ['内訳', 'c'], ['合計', 'c']],
  2: [['実店舗', 'b green'], ['', 'green'], ['416', 'n green']],
  3: [['製品A', 'i'], ['143', 'n']],
  4: [['製品B', 'i'], ['98', 'n']],
  5: [['製品C', 'i'], ['175', 'n']],
  6: [['EC', 'b green'], ['', 'green'], ['651', 'n green']],
  7: [['製品A', 'i'], ['215', 'n']],
  8: [['製品B', 'i'], ['193', 'n']],
  9: [['製品C', 'i'], ['243', 'n']]
};
let html = '<colgroup>' + widths.map(w => `<col style="width:${w}px">`).join('') + '</colgroup><thead><tr>';
html += '<th class="corner"><svg width="16" height="16" viewBox="0 0 16 16"><path d="M16 0v16H0z" fill="#b4b4b4"/></svg></th>';
for (let c = 0; c < 23; c++) {
  html += `<th${c === 0 ? ' class="sel"' : ''}>${c < 22 ? String.fromCharCode(65 + c) : ''}</th>`;
}
html += '</tr></thead><tbody>';
for (let r = 1; r <= 30; r++) {
  html += `<tr${r < 10 ? ' class="tall-row"' : ''}><th${r === 1 ? ' class="sel"' : ''}>${r < 30 ? r : ''}</th>`;
  for (let c = 0; c < 23; c++) {
    const [text, cls] = (rows[r] || [])[c] || ['', ''];
    html += `<td${cls ? ` class="${cls}"` : ''}>${text}</td>`;
  }
  html += '</tr>';
}
document.getElementById('grid').innerHTML = html + '</tbody>';
```
